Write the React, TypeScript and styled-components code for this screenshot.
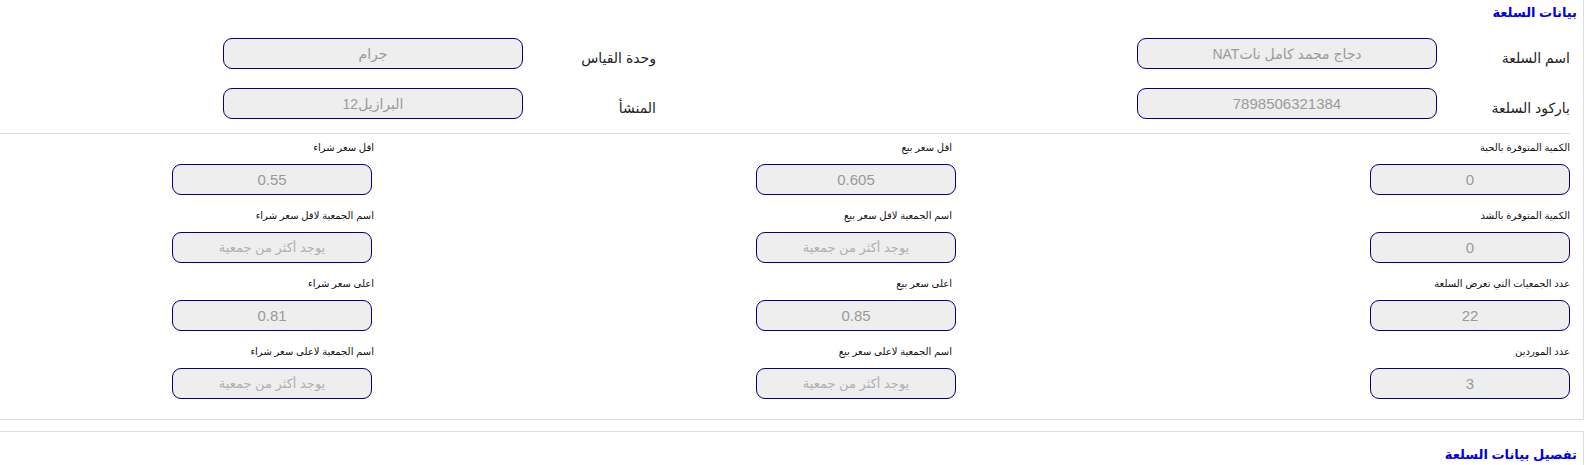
import React from "react";
import styled, { createGlobalStyle } from "styled-components";

const Global = createGlobalStyle`
  html, body { margin: 0; padding: 0; background: #fff; }
  body { font-family: "Liberation Sans", "DejaVu Sans", Arial, sans-serif; direction: rtl; }
  * { box-sizing: border-box; }
`;

const Page = styled.div`
  direction: rtl;
  padding-right: 6px;
  display: flex;
  flex-direction: column;
  gap: 11px;
`;

const Panel = styled.section<{ $top?: boolean }>`
  border: 1px solid #d9dee4;
  border-left: none;
  border-top: ${(p) => (p.$top ? "1px solid #d9dee4" : "none")};
  padding: 0 6px 0 0;
`;

const Title = styled.h3<{ $pt: number }>`
  margin: 0;
  padding-top: ${(p) => p.$pt}px;
  font-size: 13px;
  line-height: 16px;
  font-weight: bold;
  color: #0000ee;
`;

const TopGrid = styled.div`
  display: grid;
  grid-template-columns: 914px 1fr;
  row-gap: 19px;
  padding: 17px 7px 0 0;
`;

const TopField = styled.div`
  display: flex;
  align-items: flex-start;
`;

const TopLabel = styled.label`
  width: 133px;
  padding-top: 11px;
  font-size: 14px;
  line-height: 18px;
  color: #222;
`;

const Input = styled.input<{ $w: number; $fs: number }>`
  width: ${(p) => p.$w}px;
  height: 31px;
  background: #eeeeee;
  border: 1px solid #000080;
  border-radius: 9px;
  text-align: center;
  font-family: "Liberation Sans", "DejaVu Sans", Arial, sans-serif;
  font-size: ${(p) => p.$fs}px;
  color: #9a9a9a;
  padding: 0 8px;
  outline: none;
  &::placeholder { color: #b0b0b0; }
`;

const Separator = styled.hr`
  margin: 14px 7px 0 0;
  border: none;
  border-top: 1px solid #d5dce3;
`;

const StatsGrid = styled.div`
  display: grid;
  grid-template-columns: 614px 584px 1fr;
  row-gap: 13px;
  padding: 6px 7px 20px 0;
`;

const Cell = styled.div<{ $lo: number }>`
  display: flex;
  flex-direction: column;
  align-items: flex-start;
  gap: 8px;
  & > label { margin-right: ${(p) => p.$lo}px; }
`;

const SmallLabel = styled.label`
  font-size: 10px;
  line-height: 16px;
  color: #111;
  white-space: nowrap;
`;

const PanelTwo = styled(Panel)`
  height: 35px;
  border-bottom: none;
`;

type Stat = { label: string; value?: string; placeholder?: string };

const rows: Stat[][] = [
  [
    { label: "الكمية المتوفرة بالحبة", value: "0" },
    { label: "اقل سعر بيع", value: "0.605" },
    { label: "اقل سعر شراء", value: "0.55" },
  ],
  [
    { label: "الكمية المتوفرة بالشد", value: "0" },
    { label: "اسم الجمعية لاقل سعر بيع", placeholder: "يوجد أكثر من جمعية" },
    { label: "اسم الجمعية لاقل سعر شراء", placeholder: "يوجد أكثر من جمعية" },
  ],
  [
    { label: "عدد الجمعيات التي تعرض السلعة", value: "22" },
    { label: "اعلى سعر بيع", value: "0.85" },
    { label: "اعلى سعر شراء", value: "0.81" },
  ],
  [
    { label: "عدد الموردين", value: "3" },
    { label: "اسم الجمعية لاعلى سعر بيع", placeholder: "يوجد أكثر من جمعية" },
    { label: "اسم الجمعية لاعلى سعر شراء", placeholder: "يوجد أكثر من جمعية" },
  ],
];

const labelOffsets = [0, 4, -2];

export default function App() {
  return (
    <>
      <Global />
      <Page>
        <Panel>
          <Title $pt={5}>بيانات السلعة</Title>
          <TopGrid>
            <TopField>
              <TopLabel>اسم السلعة</TopLabel>
              <Input $w={300} $fs={14} readOnly value="دجاج مجمد كامل ناتNAT" />
            </TopField>
            <TopField>
              <TopLabel>وحدة القياس</TopLabel>
              <Input $w={300} $fs={14} readOnly value="جرام" />
            </TopField>
            <TopField>
              <TopLabel>باركود السلعة</TopLabel>
              <Input $w={300} $fs={15} readOnly value="7898506321384" />
            </TopField>
            <TopField>
              <TopLabel>المنشأ</TopLabel>
              <Input $w={300} $fs={14} readOnly value="البرازيل12" />
            </TopField>
          </TopGrid>
          <Separator />
          <StatsGrid>
            {rows.flat().map((s, i) => (
              <Cell key={i} $lo={labelOffsets[i % 3]}>
                <SmallLabel>{s.label}</SmallLabel>
                {s.value !== undefined ? (
                  <Input $w={200} $fs={15} readOnly value={s.value} />
                ) : (
                  <Input $w={200} $fs={13} readOnly placeholder={s.placeholder} />
                )}
              </Cell>
            ))}
          </StatsGrid>
        </Panel>
        <PanelTwo $top>
          <Title $pt={15}>تفصيل بيانات السلعة</Title>
        </PanelTwo>
      </Page>
    </>
  );
}
